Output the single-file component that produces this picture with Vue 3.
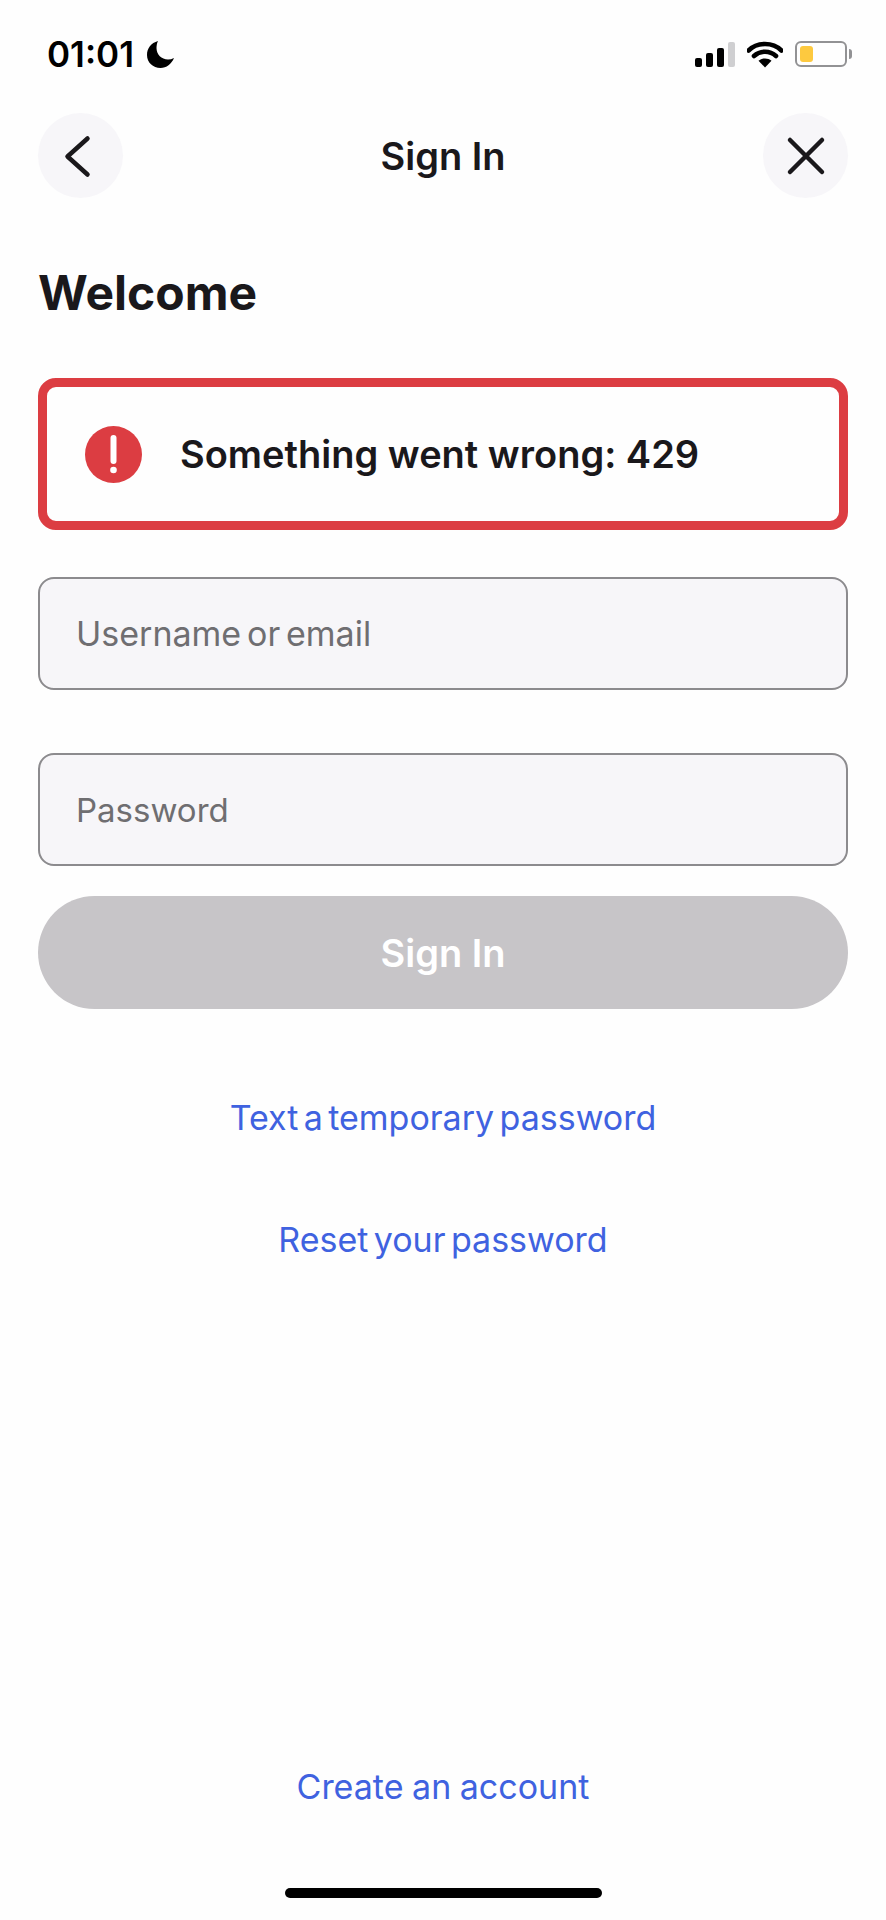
<script setup>
const links = ['Text a temporary password', 'Reset your password']
</script>

<template>
  <div class="page">
    <div class="status">
      <div class="status-left">
        <span class="time">01:01</span>
        <svg class="moon" width="27" height="27" viewBox="0 0 27 27">
          <path d="M11 0C4 2 0 7.500 0 14c0 7.500 6 13 13.500 13 6 0 11-4 13.500-10-2 1-4 1.500-6 1.500-6.500 0-11.500-5-11.500-11.500 0-2.500.5-5 1.500-7z" fill="#000" />
        </svg>
      </div>
      <div class="status-right">
        <div class="signal">
          <i class="b1"></i><i class="b2"></i><i class="b3"></i><i class="b4"></i>
        </div>
        <svg class="wifi" width="36" height="27" viewBox="0 0 36 27">
          <path d="M1.5 9.500C6 5 11.500 3 18 3s12 2 16.500 6.500M7 15c3-2.800 6.800-4.300 11-4.300s8 1.500 11 4.300" fill="none" stroke="#000" stroke-width="4.600" stroke-linecap="round" />
          <path d="M18 26.500l-6.500-6.800c1.800-1.500 4-2.300 6.500-2.300s4.700.8 6.500 2.300z" fill="#000" />
        </svg>
        <div class="battery">
          <div class="battery-body"><div class="battery-fill"></div></div>
          <div class="battery-tip"></div>
        </div>
      </div>
    </div>

    <div class="nav">
      <button class="round">
        <svg width="40" height="48" viewBox="0 0 40 48">
          <path d="M26.500 6.500L6.500 24.500 26.500 42.500" fill="none" stroke="#1a181b" stroke-width="4.500" stroke-linecap="round" stroke-linejoin="round" />
        </svg>
      </button>
      <div class="nav-title">Sign In</div>
      <button class="round">
        <svg width="40" height="40" viewBox="0 0 40 40">
          <path d="M4 4l32 32M36 4L4 36" fill="none" stroke="#1a181b" stroke-width="4.500" stroke-linecap="round" />
        </svg>
      </button>
    </div>

    <h1 class="welcome">Welcome</h1>

    <div class="alert">
      <svg class="alert-icon" width="57" height="57" viewBox="0 0 57 57">
        <circle cx="28.500" cy="28.500" r="28.500" fill="#dc3d42" />
        <rect x="25.500" y="9" width="6" height="29" rx="3" fill="#fff" />
        <circle cx="28.500" cy="44" r="3.300" fill="#fff" />
      </svg>
      <span class="alert-text">Something went wrong: 429</span>
    </div>

    <div class="field username">Username or email</div>
    <div class="field second">Password</div>
    <div class="submit">Sign In</div>

    <div class="links">
      <a v-for="l in links" :key="l" class="link">{{ l }}</a>
    </div>

    <div class="bottom">
      <a class="link create">Create an account</a>
      <div class="home-bar"></div>
    </div>
  </div>
</template>

<style>
html, body {
  margin: 0;
  background: #fefefe;
}
</style>

<style scoped>
.page {
  width: 886px;
  height: 1920px;
  box-sizing: border-box;
  padding: 0 38px;
  display: flex;
  flex-direction: column;
  background: #fefefe;
  font-family: Inter, "Liberation Sans", sans-serif;
  color: #1a181b;
}

.status {
  height: 113px;
  display: flex;
  justify-content: space-between;
  align-items: flex-start;
  padding-top: 38px;
  box-sizing: border-box;
}

.status-left {
  display: flex;
  align-items: center;
  gap: 13px;
  margin-left: 9px;
  height: 32px;
}

.time {
  font-size: 35px;
  font-weight: 600;
  line-height: 32px;
  color: #000;
}

.status-right {
  display: flex;
  align-items: center;
  gap: 12px;
  height: 32px;
  margin-right: -4px;
}

.signal {
  display: flex;
  align-items: flex-end;
  gap: 4px;
  height: 25px;
}

.signal i {
  display: block;
  width: 7px;
  border-radius: 2px;
  background: #000;
}

.signal .b1 { height: 9px; }
.signal .b2 { height: 14px; }
.signal .b3 { height: 19px; }
.signal .b4 { height: 25px; background: #cfcfd1; }

.battery {
  display: flex;
  align-items: center;
  gap: 2px;
}

.battery-body {
  width: 52px;
  height: 26px;
  box-sizing: border-box;
  border: 2px solid #929294;
  border-radius: 6px;
  padding: 3px;
}

.battery-fill {
  width: 13px;
  height: 100%;
  border-radius: 3px;
  background: #fdc93f;
}

.battery-tip {
  width: 3px;
  height: 10px;
  border-radius: 0 3px 3px 0;
  background: #929294;
}

.nav {
  height: 85px;
  display: flex;
  justify-content: space-between;
  align-items: center;
}

.round {
  width: 85px;
  height: 85px;
  border: 0;
  padding: 0;
  border-radius: 50%;
  background: #f7f6f9;
  display: flex;
  align-items: center;
  justify-content: center;
}

.nav-title {
  font-size: 38px;
  font-weight: 600;
}

.welcome {
  margin: 65px 0 0;
  font-size: 48px;
  font-weight: 700;
  line-height: 60px;
}

.alert {
  margin-top: 55px;
  height: 152px;
  box-sizing: border-box;
  border: 9px solid #dc3d42;
  border-radius: 18px;
  padding-left: 38px;
  display: flex;
  align-items: center;
  gap: 38px;
}

.alert-text {
  font-size: 38px;
  font-weight: 600;
}

.field {
  height: 113px;
  box-sizing: border-box;
  margin-top: 47px;
  border: 2px solid #8c8b8e;
  border-radius: 16px;
  background: #f7f6f9;
  padding-left: 36px;
  display: flex;
  align-items: center;
  font-size: 33px;
  color: #6f6e71;
}

.field.username {
  font-size: 34px;
  word-spacing: -3.750px;
}

.field.second {
  margin-top: 63px;
}

.submit {
  height: 113px;
  margin-top: 30px;
  border-radius: 57px;
  background: #c7c5c8;
  color: #fff;
  display: flex;
  align-items: center;
  justify-content: center;
  font-size: 38px;
  font-weight: 600;
}

.links {
  margin-top: 89px;
  display: flex;
  flex-direction: column;
  align-items: center;
  gap: 82px;
}

.link {
  font-size: 34px;
  line-height: 40px;
  word-spacing: -4.200px;
  color: #3f62e0;
  text-align: center;
}

.link.create {
  word-spacing: -1px;
}

.bottom {
  margin-top: auto;
  display: flex;
  flex-direction: column;
  align-items: center;
}

.home-bar {
  width: 317px;
  height: 10px;
  margin-top: 81px;
  margin-bottom: 22px;
  border-radius: 5px;
  background: #000;
}
</style>
